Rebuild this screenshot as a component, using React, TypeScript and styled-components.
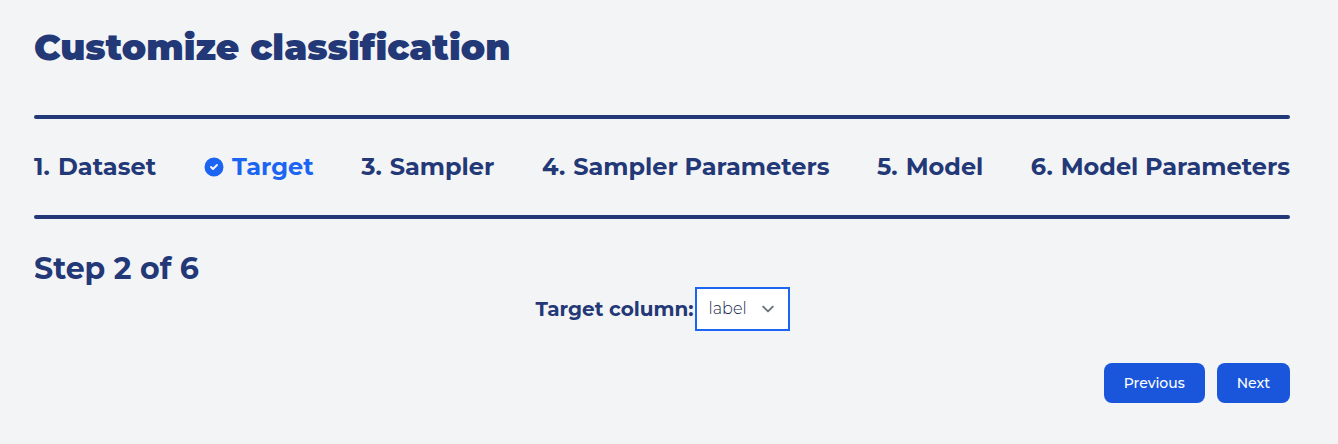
import React from "react";
import styled, { createGlobalStyle } from "styled-components";

const GlobalStyle = createGlobalStyle`
  *, *::before, *::after { box-sizing: border-box; }
  body {
    margin: 0;
    background: #f3f4f6;
    color: #233876;
    font-family: Montserrat, Inter, "Liberation Sans", sans-serif;
  }
`;

const Page = styled.main`
  min-height: 444px;
  padding: 24px 48px 0 34px;
`;

const Title = styled.h1`
  margin: 0;
  height: 91px;
  font-size: 36px;
  line-height: 47px;
  font-weight: 900;
  letter-spacing: 0.03px;
  white-space: nowrap;
`;

const Rule = styled.hr`
  height: 4px;
  margin: 0;
  border: 0;
  border-radius: 2px;
  background: #233876;
`;

const Steps = styled.ol`
  display: flex;
  justify-content: space-between;
  align-items: center;
  height: 96px;
  margin: 0;
  padding: 0;
  list-style: none;
`;

const Step = styled.li<{ $active?: boolean }>`
  display: flex;
  align-items: center;
  gap: 8px;
  font-size: 24px;
  line-height: 32px;
  font-weight: 700;
  white-space: nowrap;
  color: ${(p) => (p.$active ? "#1c64f2" : "#233876")};

  &:first-child {
    letter-spacing: 0.08px;
    margin-right: 0.3px;
  }
`;

const StepNumber = styled.span``;

const StepHeading = styled.h2`
  margin: 32px 0 0;
  font-size: 30px;
  line-height: 36px;
  font-weight: 700;
`;

const Field = styled.div`
  display: flex;
  justify-content: center;
  align-items: center;
  height: 44px;
  padding-left: 1px;
`;

const FieldLabel = styled.label`
  margin-right: 1px;
  font-size: 20px;
  line-height: 28px;
  font-weight: 700;
  white-space: nowrap;
`;

const Select = styled.button`
  display: flex;
  align-items: center;
  justify-content: space-between;
  width: 95px;
  height: 44px;
  padding: 0 14px 0 12px;
  border: 2px solid #1c64f2;
  background: #fff;
  color: #141d4a;
  font: inherit;
  font-size: 16px;
  font-weight: 300;
`;

const SelectValue = styled.span`
  padding-bottom: 2px;
`;

const Actions = styled.div`
  display: flex;
  justify-content: flex-end;
  gap: 12px;
  margin-top: 32px;
`;

const Button = styled.button`
  height: 40px;
  padding: 0 20px;
  border: 0;
  border-radius: 8px;
  background: #1a56db;
  color: #fff;
  font: inherit;
  font-size: 14px;
  font-weight: 500;
`;

const CheckIcon = () => (
  <svg width="20" height="20" viewBox="0 0 20 20" fill="currentColor" aria-hidden="true">
    <path d="M10 .5a9.5 9.5 0 1 0 9.5 9.5A9.51 9.51 0 0 0 10 .5Zm3.707 8.207-4 4a1 1 0 0 1-1.414 0l-2-2a1 1 0 0 1 1.414-1.414L9 10.586l3.293-3.293a1 1 0 0 1 1.414 1.414Z" />
  </svg>
);

const Chevron = () => (
  <svg width="12" height="12" viewBox="0 0 10 10" fill="none" aria-hidden="true">
    <path d="m1 3 4 4 4-4" stroke="#6b7280" strokeWidth="1.6" strokeLinecap="round" strokeLinejoin="round" />
  </svg>
);

const steps = ["Dataset", "Target", "Sampler", "Sampler Parameters", "Model", "Model Parameters"];
const current = 1;

export default function App() {
  return (
    <Page>
      <GlobalStyle />
      <Title>Customize classification</Title>
      <Rule />
      <Steps>
        {steps.map((label, i) => (
          <Step key={label} $active={i === current}>
            {i === current ? <CheckIcon /> : <StepNumber>{i + 1}.</StepNumber>}
            {label}
          </Step>
        ))}
      </Steps>
      <Rule />
      <StepHeading>
        Step {current + 1} of {steps.length}
      </StepHeading>
      <Field>
        <FieldLabel>Target column:</FieldLabel>
        <Select>
          <SelectValue>label</SelectValue>
          <Chevron />
        </Select>
      </Field>
      <Actions>
        <Button>Previous</Button>
        <Button>Next</Button>
      </Actions>
    </Page>
  );
}
